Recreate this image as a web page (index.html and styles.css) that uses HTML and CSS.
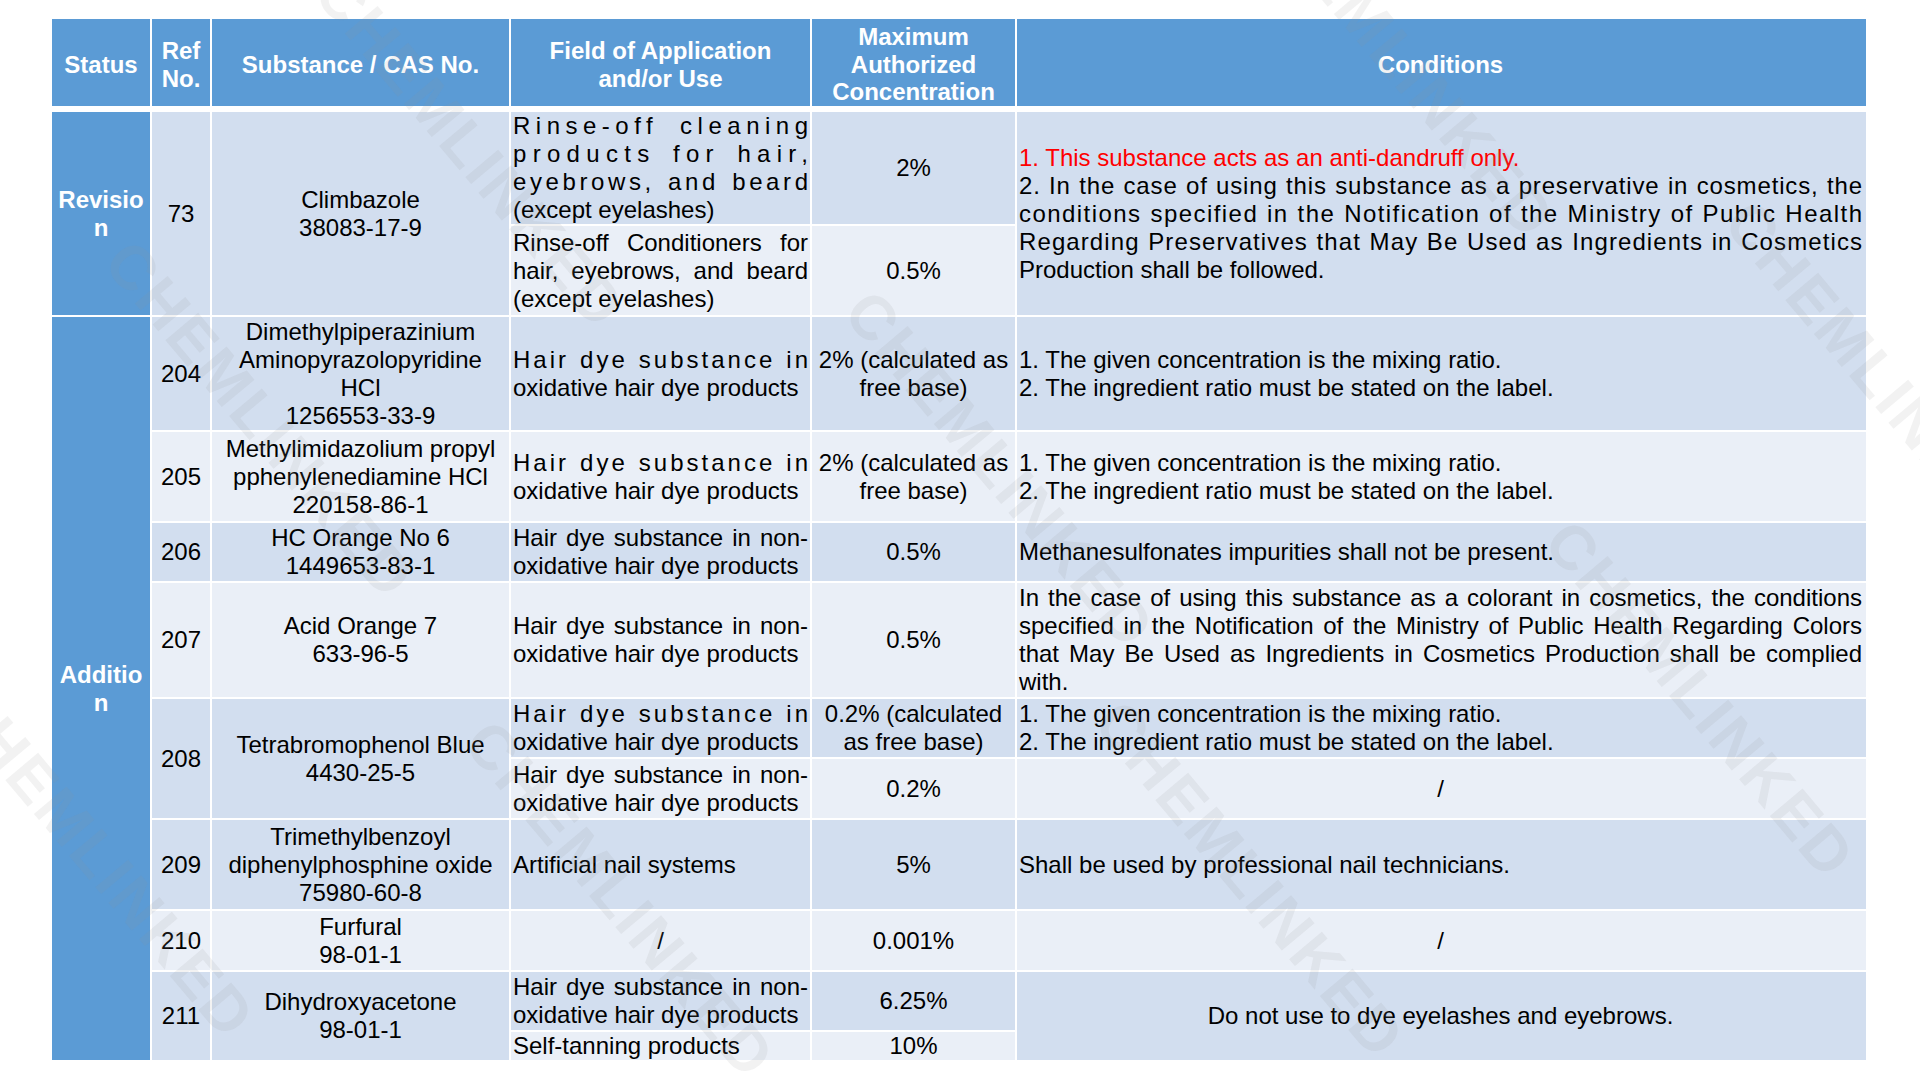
FILE: index.html
```html
<!DOCTYPE html>
<html lang="en">
<head>
<meta charset="utf-8">
<title>Cosmetic Ingredient Amendments</title>
<link rel="stylesheet" href="styles.css">
</head>
<body>
<main class="page">
<table class="reg">
<colgroup>
<col class="c-status"><col class="c-ref"><col class="c-sub"><col class="c-field"><col class="c-max"><col class="c-cond">
</colgroup>
<thead>
<tr class="hd">
<th>Status</th>
<th>Ref No.</th>
<th>Substance / CAS No.</th>
<th>Field of Application and/or Use</th>
<th>Maximum Authorized Concentration</th>
<th class="cond">Conditions</th>
</tr>
</thead>
<tbody>
<tr class="d h114">
<td class="status" rowspan="2">Revisio<wbr>n</td>
<td class="ref" rowspan="2">73</td>
<td class="sub" rowspan="2">Climbazole<br>38083-17-9</td>
<td class="field"><span class="dl ls55">Rinse-off cleaning</span><span class="dl ls63">products for hair,</span><span class="dl ls36">eyebrows, and beard</span>(except eyelashes)</td>
<td class="max">2%</td>
<td class="cond" rowspan="2">
<p class="red">1. This substance acts as an anti-dandruff only.</p>
<p><span class="dl ls085">2. In the case of using this substance as a preservative in cosmetics, the</span><span class="dl ls145">conditions specified in the Notification of the Ministry of Public Health</span><span class="dl ls11">Regarding Preservatives that May Be Used as Ingredients in Cosmetics</span>Production shall be followed.</p>
</td>
</tr>
<tr class="l h91">
<td class="field">Rinse-off Conditioners for hair, eyebrows, and beard (except eyelashes)</td>
<td class="max">0.5%</td>
</tr>
<tr class="d h115">
<td class="status" rowspan="10">Additio<wbr>n</td>
<td class="ref">204</td>
<td class="sub">Dimethylpiperazinium<br>Aminopyrazolopyridine<br>HCl<br>1256553-33-9</td>
<td class="field"><span class="dl ls30">Hair dye substance in</span>oxidative hair dye products</td>
<td class="max">2% (calculated as free base)</td>
<td class="cond"><p>1. The given concentration is the mixing ratio.</p><p>2. The ingredient ratio must be stated on the label.</p></td>
</tr>
<tr class="l h91">
<td class="ref">205</td>
<td class="sub">Methylimidazolium propyl<br>pphenylenediamine HCl<br>220158-86-1</td>
<td class="field"><span class="dl ls30">Hair dye substance in</span>oxidative hair dye products</td>
<td class="max">2% (calculated as free base)</td>
<td class="cond"><p>1. The given concentration is the mixing ratio.</p><p>2. The ingredient ratio must be stated on the label.</p></td>
</tr>
<tr class="d h60">
<td class="ref">206</td>
<td class="sub">HC Orange No 6<br>1449653-83-1</td>
<td class="field">Hair dye substance in non-oxidative hair dye products</td>
<td class="max">0.5%</td>
<td class="cond">Methanesulfonates impurities shall not be present.</td>
</tr>
<tr class="l h116">
<td class="ref">207</td>
<td class="sub">Acid Orange 7<br>633-96-5</td>
<td class="field">Hair dye substance in non-oxidative hair dye products</td>
<td class="max">0.5%</td>
<td class="cond just">In the case of using this substance as a colorant in cosmetics, the conditions specified in the Notification of the Ministry of Public Health Regarding Colors that May Be Used as Ingredients in Cosmetics Production shall be complied with.</td>
</tr>
<tr class="d h60">
<td class="ref" rowspan="2">208</td>
<td class="sub" rowspan="2">Tetrabromophenol Blue<br>4430-25-5</td>
<td class="field"><span class="dl ls30">Hair dye substance in</span>oxidative hair dye products</td>
<td class="max">0.2% (calculated as free base)</td>
<td class="cond"><p>1. The given concentration is the mixing ratio.</p><p>2. The ingredient ratio must be stated on the label.</p></td>
</tr>
<tr class="l h61">
<td class="field">Hair dye substance in non-oxidative hair dye products</td>
<td class="max">0.2%</td>
<td class="cond center">/</td>
</tr>
<tr class="d h91">
<td class="ref">209</td>
<td class="sub">Trimethylbenzoyl<br>diphenylphosphine oxide<br>75980-60-8</td>
<td class="field">Artificial nail systems</td>
<td class="max">5%</td>
<td class="cond">Shall be used by professional nail technicians.</td>
</tr>
<tr class="l h61">
<td class="ref">210</td>
<td class="sub">Furfural<br>98-01-1</td>
<td class="field center">/</td>
<td class="max">0.001%</td>
<td class="cond center">/</td>
</tr>
<tr class="d h60">
<td class="ref" rowspan="2">211</td>
<td class="sub" rowspan="2">Dihydroxyacetone<br>98-01-1</td>
<td class="field">Hair dye substance in non-oxidative hair dye products</td>
<td class="max">6.25%</td>
<td class="cond center" rowspan="2">Do not use to dye eyelashes and eyebrows.</td>
</tr>
<tr class="l h30">
<td class="field">Self-tanning products</td>
<td class="max">10%</td>
</tr>
</tbody>
</table>
<div class="wm-layer" aria-hidden="true">
<span class="wm w1">CHEMLINKED</span>
<span class="wm w2">CHEMLINKED</span>
<span class="wm w3">CHEMLINKED</span>
<span class="wm w4">CHEMLINKED</span>
<span class="wm w5">CHEMLINKED</span>
<span class="wm w6">CHEMLINKED</span>
<span class="wm w7">CHEMLINKED</span>
<span class="wm w8">CHEMLINKED</span>
<span class="wm w9">CHEMLINKED</span>
</div>
</main>
</body>
</html>
```

FILE: styles.css
```css
* { box-sizing: border-box; }
html, body { margin: 0; padding: 0; background: #ffffff; }
body {
  font-family: "Liberation Sans", Arial, Helvetica, sans-serif;
  color: #000000;
}
.page {
  position: relative;
  width: 1920px;
  height: 1080px;
  padding: 19px 0 0 52px;
  overflow: hidden;
}
.reg {
  border-collapse: separate;
  border-spacing: 0;
  table-layout: fixed;
  width: 1814px;
  font-size: 24px;
  line-height: 28px;
}
.c-status { width: 100px; }
.c-ref { width: 60px; }
.c-sub { width: 299px; }
.c-field { width: 301px; }
.c-max { width: 205px; }
.c-cond { width: 849px; }

.reg th, .reg td {
  padding: 0 2px;
  border-right: 2px solid #ffffff;
  border-bottom: 2px solid #ffffff;
  vertical-align: middle;
}
.reg .cond { border-right: 0; padding-right: 4px; }

.hd { height: 93px; }
.hd th {
  background: #5b9bd5;
  color: #ffffff;
  font-weight: bold;
  text-align: center;
  line-height: 27.5px;
  padding-top: 4px;
  border-bottom-width: 6px;
}

.h114 { height: 114px; }
.h91 { height: 91px; }
.h115 { height: 115px; }
.h60 { height: 60px; }
.h61 { height: 61px; }
.h116 { height: 116px; }
.h30 { height: 30px; }

tr.d > td { background: #d2deef; }
tr.l > td { background: #eaeff7; }
tr > td.status {
  background: #5b9bd5;
  color: #ffffff;
  font-weight: bold;
  text-align: center;
}

.ref, .sub, .max { text-align: center; }
.field { text-align: justify; }
.cond { text-align: left; }
.just { text-align: justify; }
.reg .center { text-align: center; }

.reg p { margin: 0; }
.red { color: #ff0000; }

.dl {
  display: block;
  text-align: justify;
  text-align-last: justify;
}
.ls55 { letter-spacing: 5.5px; margin-right: -5.5px; }
.ls63 { letter-spacing: 6.3px; margin-right: -6.3px; }
.ls36 { letter-spacing: 3.6px; margin-right: -3.6px; }
.ls30 { letter-spacing: 3px; margin-right: -3px; }
.ls085 { letter-spacing: 0.85px; margin-right: -0.85px; }
.ls145 { letter-spacing: 1.45px; margin-right: -1.45px; }
.ls11 { letter-spacing: 1.1px; margin-right: -1.1px; }

.wm-layer {
  position: absolute;
  inset: 0;
  pointer-events: none;
  overflow: hidden;
}
.wm {
  position: absolute;
  width: 480px;
  height: 70px;
  line-height: 70px;
  text-align: center;
  font-family: "Liberation Sans", Arial, sans-serif;
  font-weight: bold;
  font-size: 62px;
  letter-spacing: 3px;
  color: rgba(150, 150, 150, 0.12);
  transform: rotate(50deg);
  white-space: nowrap;
}
.w1 { left: 230px; top: 115px; }
.w2 { left: 1160px; top: 25px; }
.w3 { left: 20px; top: 385px; }
.w4 { left: 760px; top: 435px; }
.w5 { left: 1640px; top: 345px; }
.w6 { left: -140px; top: 825px; }
.w7 { left: 380px; top: 865px; }
.w8 { left: 1010px; top: 845px; }
.w9 { left: 1460px; top: 665px; }
```
